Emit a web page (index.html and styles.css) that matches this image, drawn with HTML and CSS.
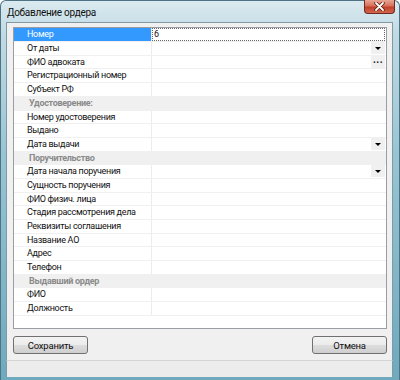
FILE: index.html
```html
<!DOCTYPE html>
<html lang="ru">
<head>
    <meta charset="UTF-8">
    <title>Добавление ордера</title>
    <link rel="stylesheet" href="styles.css">
</head>
<body>
    <div class="window">
        <div class="titlebar">
            <span class="title">Добавление ордера</span>
            <div class="close">
                <svg width="11" height="9" viewBox="0 0 11 9">
                    <path d="M2 1 L9 8 M9 1 L2 8" stroke="#5a1b10" stroke-width="3.4" stroke-linecap="round"/>
                    <path d="M2 1 L9 8 M9 1 L2 8" stroke="#fff" stroke-width="1.8" stroke-linecap="round"/>
                </svg>
            </div>
        </div>
        <div class="client">
            <div class="grid">
                <div class="row selected"><div class="name">Номер</div><div class="value focus">6</div></div>
                <div class="row"><div class="name">От даты</div><div class="value"><span class="drop"></span></div></div>
                <div class="row"><div class="name">ФИО адвоката</div><div class="value"><span class="dots">...</span></div></div>
                <div class="row"><div class="name">Регистрационный номер</div><div class="value"></div></div>
                <div class="row"><div class="name">Субъект РФ</div><div class="value"></div></div>
                <div class="row category">Удостоверение:</div>
                <div class="row"><div class="name">Номер удостоверения</div><div class="value"></div></div>
                <div class="row"><div class="name">Выдано</div><div class="value"></div></div>
                <div class="row"><div class="name">Дата выдачи</div><div class="value"><span class="drop"></span></div></div>
                <div class="row category">Поручительство</div>
                <div class="row"><div class="name">Дата начала поручения</div><div class="value"><span class="drop"></span></div></div>
                <div class="row"><div class="name">Сущность поручения</div><div class="value"></div></div>
                <div class="row"><div class="name">ФИО физич. лица</div><div class="value"></div></div>
                <div class="row"><div class="name">Стадия рассмотрения дела</div><div class="value"></div></div>
                <div class="row"><div class="name">Реквизиты соглашения</div><div class="value"></div></div>
                <div class="row"><div class="name">Название АО</div><div class="value"></div></div>
                <div class="row"><div class="name">Адрес</div><div class="value"></div></div>
                <div class="row"><div class="name">Телефон</div><div class="value"></div></div>
                <div class="row category">Выдавший ордер</div>
                <div class="row"><div class="name">ФИО</div><div class="value"></div></div>
                <div class="row"><div class="name">Должность</div><div class="value"></div></div>
            </div>
            <div class="buttons">
                <button type="button" class="btn">Сохранить</button>
                <button type="button" class="btn">Отмена</button>
            </div>
        </div>
        <div class="footer"></div>
    </div>
</body>
</html>
```

FILE: styles.css
```css
body {
    margin: 0;
    font-family: Roboto, "Liberation Sans", sans-serif;
    font-size: 9px;
    letter-spacing: -0.3px;
    color: #111;
    background: #fff;
}

.window {
    width: 400px;
    height: 380px;
    box-sizing: border-box;
    border: 1px solid #4d7384;
    border-bottom: none;
    border-radius: 6px 6px 0 0;
    padding: 0 6px 3px 5px;
    display: flex;
    flex-direction: column;
    background: linear-gradient(to bottom, #dbeaf0 0%, #c2dbe4 8%, #98c5d3 40%, #6ea9bd 100%);
}

.titlebar {
    height: 22px;
    display: flex;
    justify-content: space-between;
    align-items: flex-start;
}

.title {
    font-size: 10px;
    letter-spacing: -0.3px;
    padding: 6px 0 0 1px;
    color: #111;
}

.close {
    width: 31px;
    height: 14px;
    margin-top: -1px;
    margin-right: -2px;
    box-sizing: border-box;
    border: 1px solid #6e2a1f;
    border-top: none;
    border-radius: 0 0 4px 4px;
    background: linear-gradient(to bottom, #e9a695 0%, #d7705a 45%, #c2402a 55%, #d2674f 100%);
    display: flex;
    justify-content: center;
    align-items: center;
}

.client {
    flex: 1;
    background: #f0f0f0;
    border: 1px solid #7f9aa6;
    border-bottom: 1px solid #d4d4d4;
    padding: 4px 5px 6px 6px;
    display: flex;
    flex-direction: column;
}

.grid {
    height: 302px;
    box-sizing: border-box;
    border: 1px solid #9a9ea3;
    background: #fff;
}

.row {
    height: 13.7px;
    box-sizing: border-box;
    display: grid;
    grid-template-columns: 138px 1fr;
    border-bottom: 1px solid #f0f0f0;
    line-height: 12.7px;
}

.name {
    padding-left: 13px;
    border-right: 1px solid #ececec;
    white-space: nowrap;
    overflow: hidden;
}

.value {
    position: relative;
    padding-left: 2px;
}

.selected .name {
    background: #3399ff;
    color: #fff;
}

.focus {
    outline: 1px dotted #666;
    outline-offset: -1px;
    margin-right: 1px;
}

.category {
    display: block;
    background: #f0f0f0;
    color: #8a8a8a;
    font-weight: bold;
    padding-left: 15px;
}

.drop,
.dots {
    position: absolute;
    right: 1px;
    top: 0;
    width: 14px;
    height: 12px;
    background: #f0f0f0;
}

.drop::after {
    content: "";
    position: absolute;
    left: 4px;
    top: 5px;
    border-left: 3px solid transparent;
    border-right: 3px solid transparent;
    border-top: 3px solid #000;
}

.dots {
    text-align: center;
    font-size: 10px;
    font-weight: bold;
    line-height: 8px;
    letter-spacing: 0.5px;
    color: #222;
}

.buttons {
    display: flex;
    justify-content: space-between;
    margin-top: 7px;
}

.btn {
    width: 75px;
    height: 18px;
    padding: 0;
    font-family: Roboto, "Liberation Sans", sans-serif;
    font-size: 9.5px;
    letter-spacing: -0.2px;
    color: #111;
    border: 1px solid #707070;
    border-radius: 3px;
    background: linear-gradient(to bottom, #f3f3f3 0%, #ebebeb 50%, #dddddd 51%, #cfcfcf 100%);
}

.footer {
    height: 16px;
    background: #ececec;
    border-left: 1px solid #7f9aa6;
    border-right: 1px solid #7f9aa6;
}
```
